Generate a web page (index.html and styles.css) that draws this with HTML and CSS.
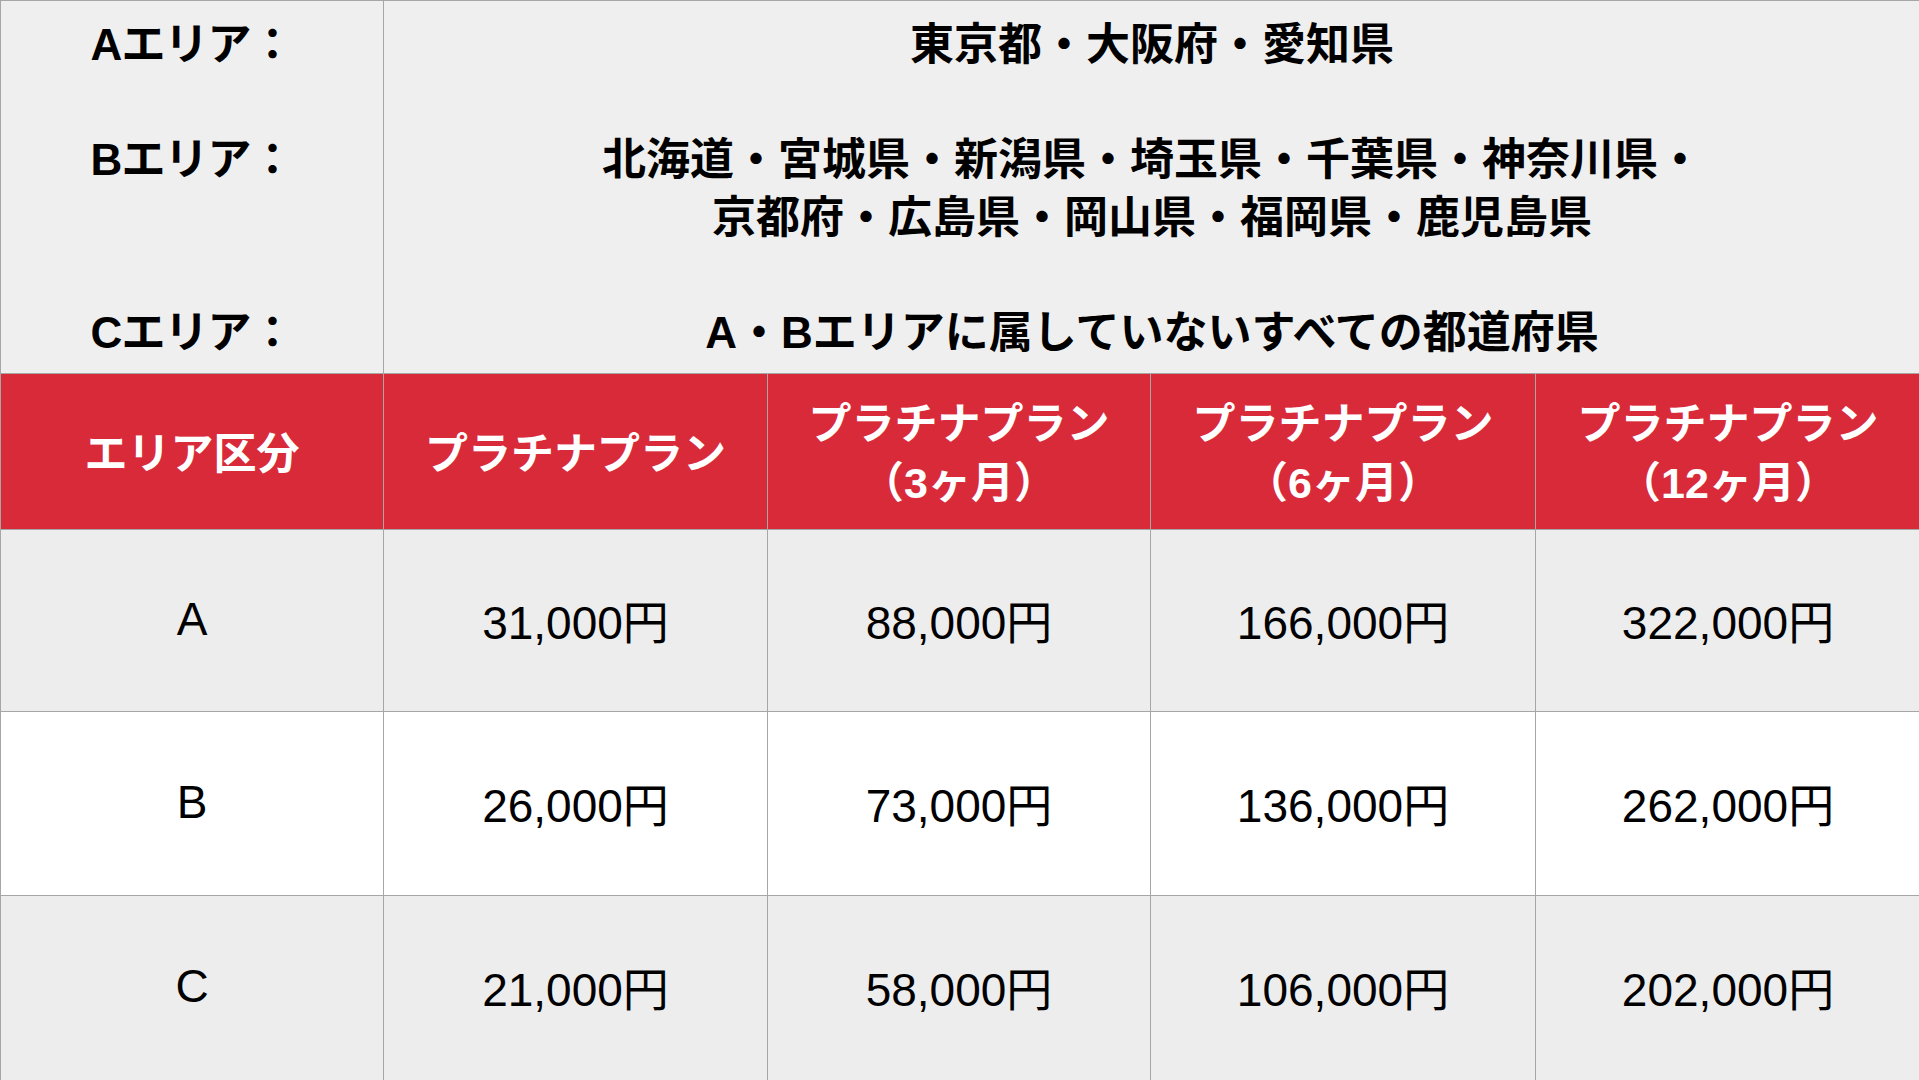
FILE: index.html
```html
<!DOCTYPE html>
<html lang="ja">
<head>
<meta charset="utf-8">
<title>プラチナプラン料金表</title>
<link rel="stylesheet" href="styles.css">
</head>
<body>
<table class="price">
  <colgroup>
    <col class="c1"><col class="c2"><col class="c3"><col class="c4"><col class="c5">
  </colgroup>
  <tr class="areas">
    <td class="area-labels">
      <div class="line">Aエリア：</div>
      <div class="line"></div>
      <div class="line">Bエリア：</div>
      <div class="line"></div>
      <div class="line"></div>
      <div class="line">Cエリア：</div>
    </td>
    <td class="area-list" colspan="4">
      <div class="line">東京都・大阪府・愛知県</div>
      <div class="line"></div>
      <div class="line">北海道・宮城県・新潟県・埼玉県・千葉県・神奈川県・</div>
      <div class="line">京都府・広島県・岡山県・福岡県・鹿児島県</div>
      <div class="line"></div>
      <div class="line">A・Bエリアに属していないすべての都道府県</div>
    </td>
  </tr>
  <tr class="head">
    <th>エリア区分</th>
    <th>プラチナプラン</th>
    <th>プラチナプラン<br>（3ヶ月）</th>
    <th>プラチナプラン<br>（6ヶ月）</th>
    <th>プラチナプラン<br>（12ヶ月）</th>
  </tr>
  <tr class="row row-a">
    <td>A</td><td>31,000円</td><td>88,000円</td><td>166,000円</td><td>322,000円</td>
  </tr>
  <tr class="row row-b">
    <td>B</td><td>26,000円</td><td>73,000円</td><td>136,000円</td><td>262,000円</td>
  </tr>
  <tr class="row row-c">
    <td>C</td><td>21,000円</td><td>58,000円</td><td>106,000円</td><td>202,000円</td>
  </tr>
</table>
</body>
</html>
```

FILE: styles.css
```css
html, body {
  margin: 0;
  padding: 0;
  background: #ffffff;
}

body {
  font-family: "Liberation Sans", "Noto Sans CJK JP", sans-serif;
  color: #000;
  overflow: hidden;
}

.price {
  border-collapse: collapse;
  table-layout: fixed;
  width: 1920px;
}

.c1 { width: 383px; }
.c2 { width: 384px; }
.c3 { width: 383px; }
.c4 { width: 385px; }
.c5 { width: 385px; }

.price td,
.price th {
  border: 1px solid #a6a6a6;
  padding: 0;
  text-align: center;
}

.areas td {
  background: #efefef;
  height: 373px;
  vertical-align: top;
  padding-top: 15px;
  box-sizing: border-box;
  font-family: "Liberation Sans", "Noto Sans CJK JP", sans-serif;
  font-weight: 700;
  font-size: 44px;
}

.area-labels .line {
  letter-spacing: -1px;
}

.line {
  height: 57.5px;
  line-height: 57px;
  white-space: nowrap;
}

.head th {
  background: #d92a3a;
  color: #ffffff;
  height: 156px;
  padding-top: 5px;
  box-sizing: border-box;
  font-family: "Liberation Sans", "Noto Sans CJK JP", sans-serif;
  font-weight: 700;
  font-size: 43px;
  line-height: 59px;
  vertical-align: middle;
}

.row td {
  font-family: "Liberation Sans", "Noto Sans CJK JP", sans-serif;
  font-size: 46px;
  font-weight: 400;
  vertical-align: middle;
  padding-bottom: 4px;
  box-sizing: border-box;
}

.row-a td { background: #ededed; height: 182px; }
.row-b td { background: #ffffff; height: 184px; }
.row-c td { background: #ededed; height: 185px; }
```
